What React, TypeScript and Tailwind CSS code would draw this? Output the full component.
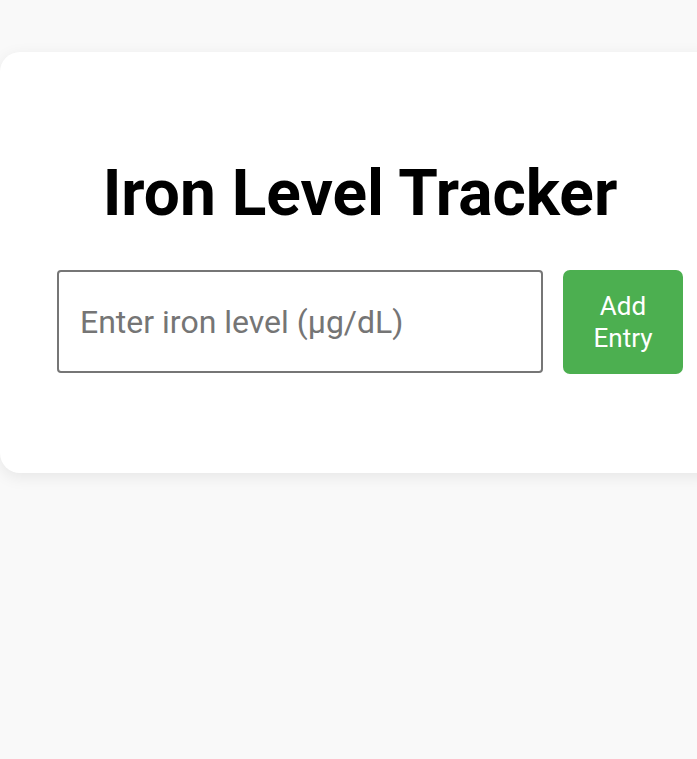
import React from "react";

export default function App() {
  return (
    <div
      className="min-h-screen w-full overflow-hidden bg-[#f9f9f9] pt-[52px]"
      style={{ fontFamily: "Roboto, 'Noto Sans', sans-serif" }}
    >
      <div className="w-[720px] rounded-[20px] bg-white px-[57px] pt-[104px] pb-[99px] shadow-[0_4px_16px_rgba(0,0,0,0.08)]">
        <h1 className="m-0 text-center text-[64px] font-bold leading-[1.2] text-black">
          Iron Level Tracker
        </h1>
        <div className="mt-[37px] flex w-[640px] shrink-0 items-center gap-[20px]">
          <input
            type="text"
            placeholder="Enter iron level (µg/dL)"
            className="h-[103px] w-[486px] shrink-0 rounded-[4px] border-2 border-[#767676] bg-white px-[21px] text-[32px] text-black outline-none placeholder:text-[#757575]"
          />
          <button className="h-[104px] w-[120px] shrink-0 rounded-[7px] bg-[#4caf50] px-[20px] text-[26px] leading-[32px] text-white">
            Add Entry
          </button>
        </div>
      </div>
    </div>
  );
}
